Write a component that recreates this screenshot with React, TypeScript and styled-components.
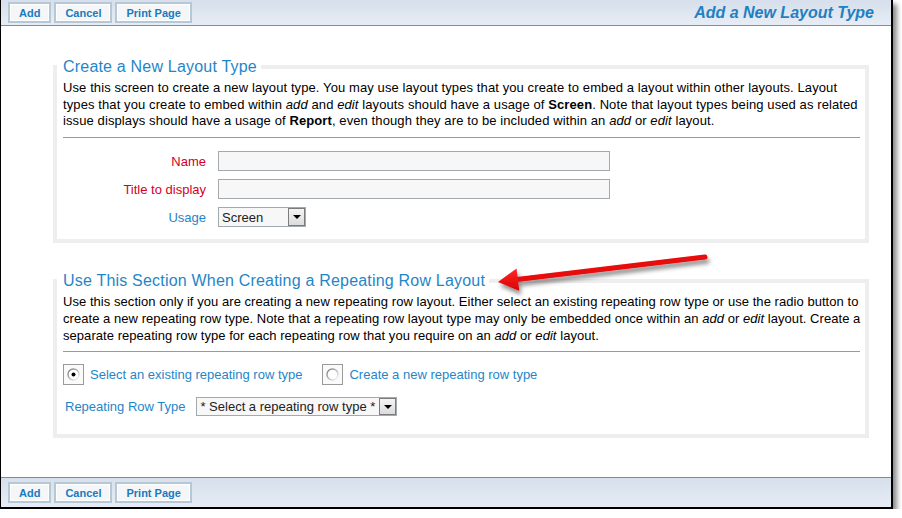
import styled, { createGlobalStyle } from "styled-components";

const GlobalStyle = createGlobalStyle`
  html, body {
    margin: 0;
    padding: 0;
    background: #fff;
  }
  body {
    font-family: "Liberation Sans", Arial, sans-serif;
  }
`;

const Frame = styled.div`
  position: relative;
  box-sizing: border-box;
  width: 893px;
  height: 509px;
  border-left: 1px solid #000;
  border-right: 2px solid #000;
  border-bottom: 2px solid #000;
  box-shadow: 4px 4px 5px rgba(0, 0, 0, 0.45);
  background: #fff;
  display: flex;
  flex-direction: column;
`;

const Toolbar = styled.div<{ $bottom?: boolean }>`
  box-sizing: border-box;
  display: flex;
  align-items: center;
  gap: 3px;
  height: ${(p) => (p.$bottom ? "30px" : "26px")};
  padding: 0 17px 0 7px;
  background: linear-gradient(#d6dfeb, #e7edf5);
  border-${(p) => (p.$bottom ? "top" : "bottom")}: 1px solid #8a8a8a;
`;

const ToolButton = styled.button`
  box-sizing: border-box;
  height: 21px;
  padding: 0 9px;
  border: 2px solid #b6c8d6;
  box-shadow: inset 0 0 0 1px #fff;
  background: #f4f6f8;
  color: #1b79be;
  font-family: "Liberation Sans", Arial, sans-serif;
  font-size: 11px;
  font-weight: bold;
  cursor: pointer;
`;

const PageTitle = styled.div`
  margin-left: auto;
  font-size: 16px;
  font-weight: bold;
  font-style: italic;
  color: #1f80c2;
`;

const Content = styled.div`
  flex: 1;
  padding: 31px 0 0 52px;
`;

const Section = styled.fieldset<{ $gap?: number }>`
  box-sizing: border-box;
  width: 816px;
  min-width: 0;
  margin: ${(p) => p.$gap ?? 0}px 0 0;
  border: 4px solid #eeeeee;
  padding: 4px 0 ${(p) => (p.$gap ? 18 : 12)}px 6px;
`;

const Legend = styled.legend`
  margin-left: -6px;
  padding: 0 4px 0 6px;
  font-size: 16px;
  line-height: 19px;
  letter-spacing: 0.2px;
  color: #1f86c8;
`;

const Description = styled.p<{ $spacing: number }>`
  margin: 0;
  font-size: 13px;
  line-height: 16.7px;
  color: #000;
  letter-spacing: ${(p) => p.$spacing}px;
`;

const Rule = styled.hr`
  margin: 7px 5px 0 0;
  border: 0;
  border-top: 1px solid #9a9a9a;
  height: 0;
`;

const FormGrid = styled.div`
  display: grid;
  grid-template-columns: 143px auto;
  column-gap: 12px;
  row-gap: 8px;
  align-items: center;
  margin-top: 13px;
`;

const FieldLabel = styled.label<{ $required?: boolean }>`
  text-align: right;
  font-size: 13px;
  color: ${(p) => (p.$required ? "#d4001c" : "#1f86c8")};
`;

const TextInput = styled.input`
  box-sizing: border-box;
  width: 392px;
  height: 20px;
  border: 1px solid #a4a9ae;
  background: #f7f7f7;
  margin: 0;
`;

const SelectBox = styled.div<{ $width: number; $height: number }>`
  box-sizing: border-box;
  display: flex;
  align-items: stretch;
  width: ${(p) => p.$width}px;
  height: ${(p) => p.$height}px;
  border: 1px solid #a4a9ae;
  background: #f7f7f7;
  font-size: 13px;
  color: #222;
`;

const SelectText = styled.span`
  flex: 1;
  display: flex;
  align-items: center;
  padding-left: 3px;
  white-space: nowrap;
  overflow: hidden;
`;

const SelectArrow = styled.span`
  box-sizing: border-box;
  width: 17px;
  display: flex;
  align-items: center;
  justify-content: center;
  border: 1px solid #7c7c7c;
  background: linear-gradient(#f4f4f4, #dcdcdc);

  &::after {
    content: "";
    border-left: 4px solid transparent;
    border-right: 4px solid transparent;
    border-top: 4px solid #000;
  }
`;

const RadioRow = styled.div`
  display: flex;
  align-items: center;
  margin-top: 12px;
`;

const RadioOption = styled.label<{ $first?: boolean }>`
  display: flex;
  align-items: center;
  gap: 6px;
  margin-left: ${(p) => (p.$first ? 0 : 20)}px;
  font-size: 13px;
  color: #1f86c8;
`;

const RadioBox = styled.span`
  box-sizing: border-box;
  width: 21px;
  height: 21px;
  display: flex;
  align-items: center;
  justify-content: center;
  border: 1px solid #9a9a9a;
  background: #fafafa;
`;

const TypeRow = styled.div`
  display: flex;
  align-items: center;
  gap: 11px;
  margin-top: 12px;
  padding-left: 2px;
`;

const Annotation = styled.svg`
  position: absolute;
  left: 480px;
  top: 246px;
  overflow: visible;
`;

function Radio({ checked }: { checked?: boolean }) {
  return (
    <svg width="13" height="13" viewBox="0 0 13 13">
      <defs>
        <linearGradient id="ring" x1="0" y1="0" x2="1" y2="1">
          <stop offset="0" stopColor="#7a7a7a" />
          <stop offset="0.55" stopColor="#bdbdbd" />
          <stop offset="1" stopColor="#ffffff" />
        </linearGradient>
      </defs>
      <circle cx="6.5" cy="6.5" r="5.5" fill="#fff" stroke="url(#ring)" strokeWidth="1.4" />
      {checked && <circle cx="6.5" cy="6.5" r="2" fill="#000" />}
    </svg>
  );
}

function Buttons() {
  return (
    <>
      <ToolButton>Add</ToolButton>
      <ToolButton>Cancel</ToolButton>
      <ToolButton>Print Page</ToolButton>
    </>
  );
}

export default function App() {
  return (
    <>
      <GlobalStyle />
      <Frame>
        <Toolbar>
          <Buttons />
          <PageTitle>Add a New Layout Type</PageTitle>
        </Toolbar>

        <Content>
          <Section>
            <Legend>Create a New Layout Type</Legend>
            <Description $spacing={0.1}>
              Use this screen to create a new layout type. You may use layout types that you create to
              embed a layout within other layouts. Layout types that you create to embed within{" "}
              <i>add</i> and <i>edit</i> layouts should have a usage of <b>Screen</b>. Note that layout
              types being used as related issue displays should have a usage of <b>Report</b>, even
              though they are to be included within an <i>add</i> or <i>edit</i> layout.
            </Description>
            <Rule />
            <FormGrid>
              <FieldLabel $required>Name</FieldLabel>
              <TextInput />
              <FieldLabel $required>Title to display</FieldLabel>
              <TextInput />
              <FieldLabel>Usage</FieldLabel>
              <SelectBox $width={88} $height={20}>
                <SelectText>Screen</SelectText>
                <SelectArrow />
              </SelectBox>
            </FormGrid>
          </Section>

          <Section $gap={28}>
            <Legend>Use This Section When Creating a Repeating Row Layout</Legend>
            <Description $spacing={0.05}>
              Use this section only if you are creating a new repeating row layout. Either select an
              existing repeating row type or use the radio button to create a new repeating row type.
              Note that a repeating row layout type may only be embedded once within an <i>add</i> or{" "}
              <i>edit</i> layout. Create a separate repeating row type for each repeating row that you
              require on an <i>add</i> or <i>edit</i> layout.
            </Description>
            <Rule />
            <RadioRow>
              <RadioOption $first>
                <RadioBox>
                  <Radio checked />
                </RadioBox>
                Select an existing repeating row type
              </RadioOption>
              <RadioOption>
                <RadioBox>
                  <Radio />
                </RadioBox>
                Create a new repeating row type
              </RadioOption>
            </RadioRow>
            <TypeRow>
              <FieldLabel>Repeating Row Type</FieldLabel>
              <SelectBox $width={201} $height={19}>
                <SelectText>* Select a repeating row type *</SelectText>
                <SelectArrow />
              </SelectBox>
            </TypeRow>
          </Section>
        </Content>

        <Toolbar $bottom>
          <Buttons />
        </Toolbar>

        <Annotation width="240" height="60" viewBox="0 0 240 60">
          <defs>
            <filter id="arrowShadow" x="-20%" y="-50%" width="140%" height="200%">
              <feDropShadow dx="2" dy="4" stdDeviation="2" floodColor="#000" floodOpacity="0.45" />
            </filter>
            <linearGradient id="arrowFill" x1="0" y1="0" x2="0" y2="1">
              <stop offset="0" stopColor="#ff2a2a" />
              <stop offset="1" stopColor="#d80000" />
            </linearGradient>
          </defs>
          <g filter="url(#arrowShadow)">
            <line x1="36" y1="33.6" x2="224" y2="11" stroke="#e80808" strokeWidth="5" strokeLinecap="round" />
            <polygon points="17,36 38.2,44.8 35.6,22.4" fill="url(#arrowFill)" />
          </g>
        </Annotation>
      </Frame>
    </>
  );
}
